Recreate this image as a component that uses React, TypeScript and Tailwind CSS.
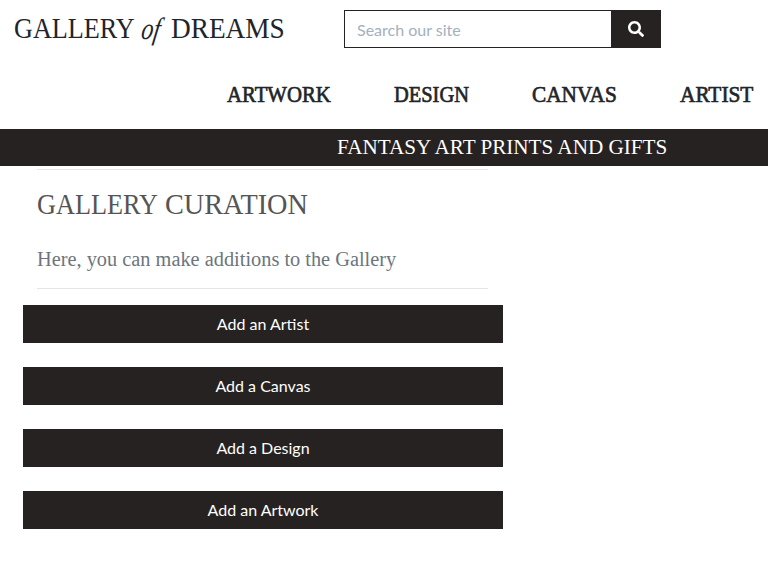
import React from "react";
import { FaSearch } from "react-icons/fa";

const serif = "font-['Liberation_Serif',serif] whitespace-nowrap origin-left";

const actions = ["Add an Artist", "Add a Canvas", "Add a Design", "Add an Artwork"];

function NavItem({ label, box, fit }: { label: string; box: string; fit: string }) {
  return (
    <a className={`${box} shrink-0`}>
      <span
        className={`${serif} ${fit} inline-block text-[23.5px] leading-[30px] text-[#212529] [-webkit-text-stroke:0.7px_#212529]`}
      >
        {label}
      </span>
    </a>
  );
}

export default function App() {
  return (
    <div className="h-[568px] w-[768px] overflow-hidden bg-white font-[Lato,sans-serif]">
      <header className="h-[129px]">
        <div className="flex h-[72px] pt-[10px]">
          <a className="flex h-[38px] w-[344px] shrink-0 pl-[14px] text-[#212529]">
            <span className="w-[128px] shrink-0">
              <span className={`${serif} inline-block scale-x-[.873] text-[30px] leading-[36px]`}>GALLERY</span>
            </span>
            <span className="w-[29px] shrink-0">
              <span className={`${serif} inline-block -skew-x-12 scale-x-[.85] scale-y-[1.1] text-[28px] italic leading-[37px]`}>
                of
              </span>
            </span>
            <span className="shrink-0">
              <span className={`${serif} inline-block scale-x-[.91] text-[30px] leading-[36px]`}>DREAMS</span>
            </span>
          </a>
          <form className="flex h-[38px] w-[317px]">
            <input
              className="h-[38px] w-[267px] border border-r-0 border-[#262222] px-3 text-base text-[#262222] outline-none placeholder:text-[#a3b1bd]"
              placeholder="Search our site"
            />
            <button type="button" className="flex h-[38px] w-[50px] items-center justify-center bg-[#262222] text-white">
              <FaSearch size={16} />
            </button>
          </form>
        </div>
        <nav className="flex pl-[227px] pt-[7px]">
          <NavItem label="ARTWORK" box="w-[167px]" fit="scale-x-[.885]" />
          <NavItem label="DESIGN" box="w-[138px]" fit="scale-x-[.87]" />
          <NavItem label="CANVAS" box="w-[148px]" fit="scale-x-[.905]" />
          <NavItem label="ARTIST" box="w-[80px]" fit="scale-x-[.908]" />
        </nav>
      </header>
      <div className="h-[37px] bg-[#262222] pl-[337px] text-white">
        <h4 className={`${serif} inline-block scale-x-[.983] text-[21.5px] leading-[37px]`}>FANTASY ART PRINTS AND GIFTS</h4>
      </div>
      <main className="w-[526px] px-[23px] pt-[3px]">
        <div className="ml-[14px] h-[120px] w-[451px] border-y border-[#e5e5e5]">
          <h2 className="flex h-[53px] pt-[15px] text-[29.5px] leading-[38px] text-[#555]">
            <span className="w-[127.5px] shrink-0">
              <span className={`${serif} block w-fit scale-x-[.89]`}>GALLERY</span>
            </span>{" "}
            <span className={`${serif} block scale-x-[.958]`}>CURATION</span>
          </h2>
          <h5 className={`${serif} w-fit scale-x-[1.017] pt-[24px] text-[20px] leading-[24px] text-[#6c757d]`}>
            Here, you can make additions to the Gallery
          </h5>
        </div>
        <div className="mt-4 flex flex-col gap-6">
          {actions.map((label) => (
            <a key={label} className="flex h-[38px] w-[480px] items-center justify-center bg-[#262222] text-base text-white">
              {label}
            </a>
          ))}
        </div>
      </main>
    </div>
  );
}
